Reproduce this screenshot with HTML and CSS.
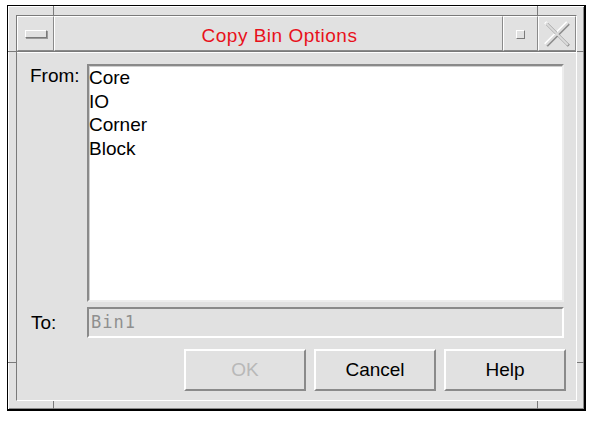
FILE: index.html
```html
<!DOCTYPE html>
<html>
<head>
<meta charset="utf-8">
<link rel="stylesheet" href="styles.css">
</head>
<body>
<div class="window">
  <span class="mark mark-tl-v"></span>
  <span class="mark mark-tl-h"></span>
  <span class="mark mark-tr-v"></span>
  <span class="mark mark-tr-h"></span>
  <span class="mark mark-bl-v"></span>
  <span class="mark mark-bl-h"></span>
  <span class="mark mark-br-v"></span>
  <span class="mark mark-br-h"></span>
  <div class="frame">
    <div class="titlebar">
      <div class="cell menu-cell"><span class="menu-bar"></span></div>
      <div class="cell title">Copy Bin Options</div>
      <div class="cell max-cell"><span class="max-box"></span></div>
      <div class="cell close-cell">
        <svg width="30" height="30" viewBox="0 0 30 30">
          <path d="M4 4 L26 26 M26 4 L4 26" stroke="#ffffff" stroke-width="3" fill="none" transform="translate(-0.8,-0.8)"/>
          <path d="M4 4 L26 26 M26 4 L4 26" stroke="#8c8c8c" stroke-width="3" fill="none" transform="translate(0.8,0.8)"/>
          <path d="M4 4 L26 26 M26 4 L4 26" stroke="#dcdcdc" stroke-width="2" fill="none"/>
        </svg>
      </div>
    </div>
    <div class="client">
      <div class="row row-list">
        <div class="label">From:</div>
        <div class="listbox">
          <div class="item">Core</div>
          <div class="item">IO</div>
          <div class="item">Corner</div>
          <div class="item">Block</div>
        </div>
      </div>
      <div class="row row-field">
        <div class="label label-to">To:</div>
        <div class="field">Bin1</div>
      </div>
      <div class="buttons">
        <div class="btn disabled">OK</div>
        <div class="btn">Cancel</div>
        <div class="btn">Help</div>
      </div>
    </div>
  </div>
</div>
</body>
</html>
```

FILE: styles.css
```css
html, body {
  margin: 0;
  padding: 0;
  background: #ffffff;
}

body {
  font-family: "Liberation Sans", Arial, sans-serif;
  font-size: 19px;
  color: #000;
}

.window {
  position: relative;
  margin: 5px 0 0 7px;
  width: 579px;
  height: 406px;
  box-sizing: border-box;
  border: 1px solid #000;
  border-right-width: 2px;
  border-bottom-width: 2px;
  background: #e1e1e1;
  box-shadow: inset 1px 1px 0 #ffffff, inset -1px -1px 0 #8a8a8a;
  padding: 9px 7px 8px 8px;
}

.mark {
  position: absolute;
  background: #7a7a7a;
}
.mark-tl-v { left: 45px; top: 0; width: 1px; height: 9px; }
.mark-tl-h { left: 0; top: 45px; width: 8px; height: 1px; }
.mark-tr-v { right: 46px; top: 0; width: 1px; height: 9px; }
.mark-tr-h { right: 0; top: 45px; width: 7px; height: 1px; }
.mark-bl-v { left: 45px; bottom: 0; width: 1px; height: 8px; }
.mark-bl-h { left: 0; bottom: 46px; width: 8px; height: 1px; }
.mark-br-v { right: 46px; bottom: 0; width: 1px; height: 8px; }
.mark-br-h { right: 0; bottom: 46px; width: 7px; height: 1px; }

.frame {
  height: 100%;
  display: flex;
  flex-direction: column;
  box-sizing: border-box;
  border: 1px solid;
  border-color: #7a7a7a #ffffff #ffffff #7a7a7a;
}

.titlebar {
  display: flex;
  height: 35px;
  flex: none;
  border-bottom: 1px solid #7a7a7a;
}

.cell {
  box-sizing: border-box;
  border: 1px solid;
  border-color: #ffffff #8a8a8a #8a8a8a #ffffff;
  display: flex;
  align-items: center;
  justify-content: center;
}

.menu-cell {
  width: 37px;
}
.menu-bar {
  width: 22px;
  height: 8px;
  box-sizing: border-box;
  border: 1px solid;
  border-color: #ffffff #7a7a7a #7a7a7a #ffffff;
  box-shadow: 1px 1px 0 #9a9a9a;
}

.title {
  flex: 1;
  color: #e8111b;
  font-size: 19px;
  letter-spacing: 0.5px;
  padding-top: 5px;
  padding-left: 2px;
}

.max-cell {
  width: 35px;
}
.max-box {
  width: 9px;
  height: 9px;
  box-sizing: border-box;
  border: 1px solid;
  border-color: #ffffff #7a7a7a #7a7a7a #ffffff;
  margin-top: 1px;
}

.close-cell {
  width: 38px;
}

.client {
  flex: 1;
  display: flex;
  flex-direction: column;
  padding: 11px 12px 9px 0;
  border-top: 1px solid #ffffff;
}

.row {
  display: flex;
}

.label {
  width: 70px;
  flex: none;
  box-sizing: border-box;
  padding-left: 13px;
  line-height: 24px;
}

.row-list {
  height: 238px;
}

.listbox {
  flex: 1;
  background: #ffffff;
  box-sizing: border-box;
  border: 2px solid;
  border-color: #8a8a8a #ededed #ededed #8a8a8a;
  box-shadow: inset 1px 1px 0 #cfcfcf;
  padding: 0;
}

.item {
  line-height: 23.7px;
}

.row-field {
  margin-top: 5px;
  height: 31px;
  align-items: center;
}

.label-to {
  padding-left: 14px;
  line-height: 31px;
}

.field {
  flex: 1;
  height: 31px;
  box-sizing: border-box;
  border: 2px solid;
  border-color: #8a8a8a #ffffff #ffffff #8a8a8a;
  background: #e1e1e1;
  font-family: "DejaVu Sans Mono", "Liberation Mono", monospace;
  font-size: 17px;
  letter-spacing: 1px;
  color: #8f8f8f;
  line-height: 27px;
  padding-left: 2px;
}

.buttons {
  margin-top: 11px;
  display: flex;
  justify-content: flex-end;
  gap: 8px;
  margin-right: -2px;
}

.btn {
  width: 122px;
  height: 42px;
  box-sizing: border-box;
  border: 2px solid;
  border-color: #ffffff #8a8a8a #8a8a8a #ffffff;
  display: flex;
  align-items: center;
  justify-content: center;
}

.btn.disabled {
  color: #b8b8b8;
}
```
